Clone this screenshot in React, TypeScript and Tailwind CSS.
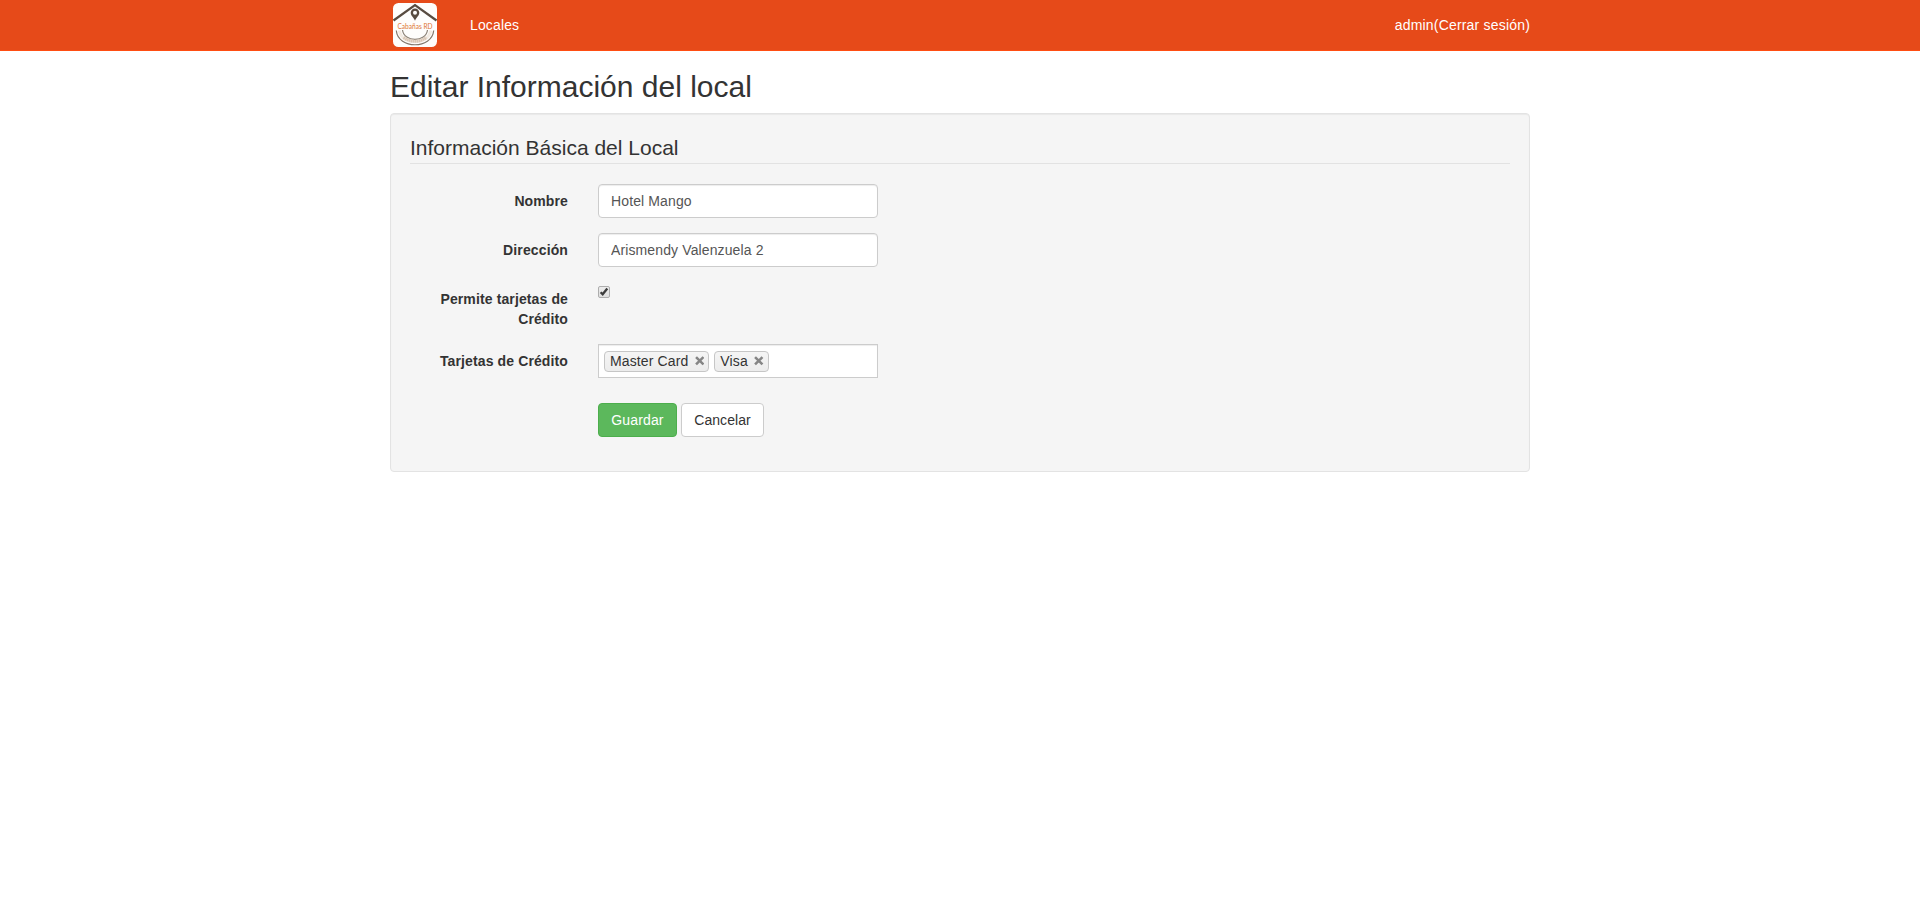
import type { ReactNode } from "react";

function Logo() {
  return (
    <svg viewBox="0 0 44 44" className="h-11 w-11 overflow-visible" aria-label="Cabañas RD">
      <rect width="44" height="44" rx="5.5" fill="#fefdfc" />
      <path d="M0.5 17.5 L22 2 L43.5 17.5" fill="none" stroke="#584b40" strokeWidth="2.2" />
      <path
        fillRule="evenodd"
        d="M22 5.400a4.300 4.300 0 0 0-4.300 4.300c0 3 3 4.600 4.300 8 1.300-3.400 4.300-5 4.300-8A4.300 4.300 0 0 0 22 5.400zm0 2.400a2 2 0 1 1 0 4 2 2 0 0 1 0-4z"
        fill="#584b40"
      />
      <text
        x="22"
        y="25.500"
        textAnchor="middle"
        textLength="35"
        lengthAdjust="spacingAndGlyphs"
        fontFamily="Lato, sans-serif"
        fontSize="7.500"
        fill="#dd7636"
      >
        Cabañas RD
      </text>
      <path d="M6.300 27.500 C8.500 42.500 35.500 42.500 37.700 27.500" fill="none" stroke="#f3ebe3" strokeWidth="3" />
      <path d="M9.500 27 C11 39.500 33 39.500 34.500 27" fill="none" stroke="#8d8378" strokeWidth="1.200" />
      <path d="M10.500 34.500 Q22 42 33.500 34.500" fill="none" stroke="#d8c5b4" strokeWidth="3" strokeDasharray="1.600 0.400" />
      <path d="M3.300 27.500 C5 46.500 39 46.500 40.700 27.500" fill="none" stroke="#82776c" strokeWidth="1.200" />
    </svg>
  );
}

function Row({ label, children }: { label?: string; children: ReactNode }) {
  return (
    <div className="mb-[15px] flex">
      <div className="w-[158px] shrink-0 pt-[7px] text-right font-bold tracking-[0.12px]">{label}</div>
      <div className="ml-[30px]">{children}</div>
    </div>
  );
}

function TextField({ value }: { value: string }) {
  return (
    <input
      type="text"
      defaultValue={value}
      className="block h-[34px] w-[280px] rounded border border-[#ccc] bg-white px-3 tracking-[0.12px] text-[#555] shadow-[inset_0_1px_1px_rgba(0,0,0,0.075)] outline-none"
    />
  );
}

function Tag({ name }: { name: string }) {
  return (
    <span className="flex h-[21px] items-center rounded-[4px] border border-[#c6c6c6] bg-gradient-to-b from-[#f5f5f5] to-[#ececec] pr-1 pl-[5px] tracking-[0.12px]">
      {name}
      <svg viewBox="0 0 9 9" className="ml-[6.5px] h-[9.5px] w-[9.5px]">
        <path d="M1 1 L8 8 M8 1 L1 8" stroke="#858585" strokeWidth="2.400" />
      </svg>
    </span>
  );
}

export default function App() {
  return (
    <div className="min-h-[911px] bg-white font-['Liberation_Sans',Arial,sans-serif] text-sm leading-5 text-[#333]">
      <nav className="h-[51px] border-b border-[#ff4d12] bg-[#e64a19] text-white">
        <div className="mx-auto flex h-[50px] w-[1140px] items-center">
          <div className="ml-[3px]">
            <Logo />
          </div>
          <a className="ml-[33px] tracking-[0.14px]">Locales</a>
          <a className="ml-auto tracking-[0.19px]">admin(Cerrar sesión)</a>
        </div>
      </nav>

      <main className="mx-auto w-[1140px]">
        <h2 className="pt-[19px] pb-2.5 text-[30px] leading-[33px]">Editar Información del local</h2>

        <section className="h-[359px] rounded border border-[#e3e3e3] bg-[#f5f5f5] p-[19px] shadow-[inset_0_1px_1px_rgba(0,0,0,0.05)]">
          <h3 className="mb-5 h-[31px] border-b border-[#e2e2e2] text-[21px] leading-[30px]">
            Información Básica del Local
          </h3>

          <Row label="Nombre">
            <TextField value="Hotel Mango" />
          </Row>
          <Row label="Dirección">
            <TextField value="Arismendy Valenzuela 2" />
          </Row>
          <Row label="Permite tarjetas de Crédito">
            <svg viewBox="0 0 12 12" className="mt-1 h-3 w-3" role="checkbox" aria-checked="true">
              <defs>
                <linearGradient id="box" x1="0" y1="0" x2="0" y2="1">
                  <stop offset="0" stopColor="#ededed" />
                  <stop offset="1" stopColor="#dedede" />
                </linearGradient>
              </defs>
              <rect x="0.500" y="0.500" width="11" height="11" rx="1.500" fill="url(#box)" stroke="#adadad" />
              <path d="M2.600 6.200 L4.700 8.300 L9.300 2.500" fill="none" stroke="#3c3c3c" strokeWidth="2.300" />
            </svg>
          </Row>
          <Row label="Tarjetas de Crédito">
            <div className="flex h-[34px] w-[280px] items-center gap-[5px] border border-[#ccc] bg-white px-[5px] shadow-[inset_0_1px_1px_rgba(0,0,0,0.075)]">
              <Tag name="Master Card" />
              <Tag name="Visa" />
            </div>
          </Row>
          <Row>
            <div className="mt-2.5 flex gap-1">
              <button className="h-[34px] w-[79px] rounded border border-[#4cae4c] bg-[#5cb85c] tracking-[0.14px] text-white">
                Guardar
              </button>
              <button className="h-[34px] w-[83px] rounded border border-[#ccc] bg-white tracking-[0.07px]">
                Cancelar
              </button>
            </div>
          </Row>
        </section>
      </main>
    </div>
  );
}
